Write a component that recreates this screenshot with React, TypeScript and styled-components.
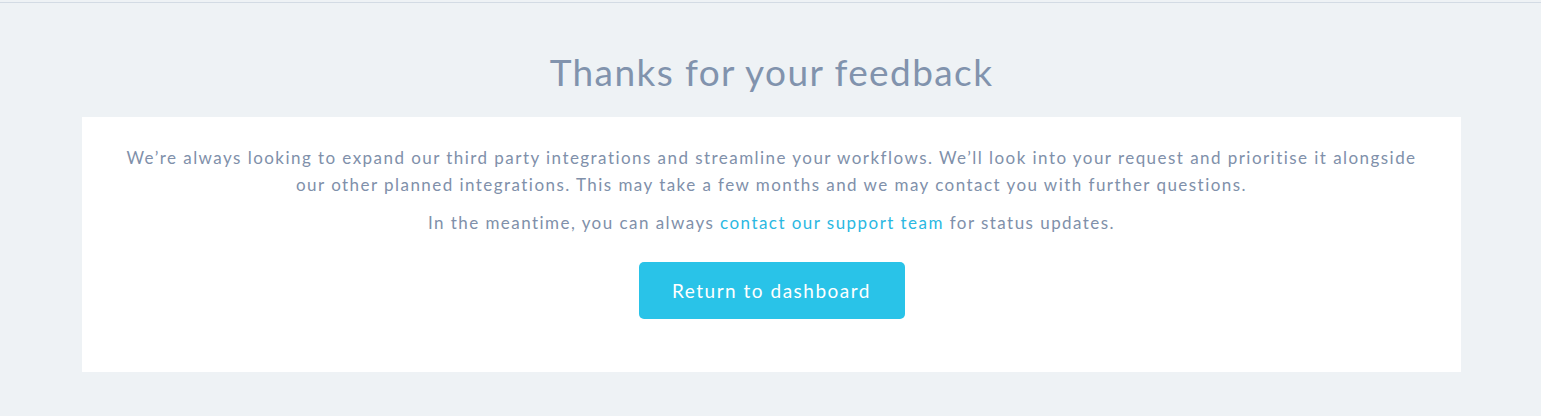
import styled, { createGlobalStyle } from 'styled-components';

const GlobalStyle = createGlobalStyle`
  html, body {
    margin: 0;
    padding: 0;
    background: #eef2f5;
  }
  body {
    font-family: 'Lato', 'Noto Sans', sans-serif;
  }
`;

const Page = styled.div`
  min-height: 416px;
  padding-top: 2px;
  box-sizing: border-box;
`;

const TopRule = styled.div`
  height: 1px;
  background: #d3dbe4;
`;

const Main = styled.main`
  display: flex;
  flex-direction: column;
  align-items: center;
  padding: 0 80px 0 82px;
`;

const Title = styled.h1`
  margin: 44px 0 0;
  height: 70px;
  font-size: 37px;
  font-weight: 400;
  line-height: 50px;
  letter-spacing: 1.4px;
  color: #8193ad;
`;

const Card = styled.section`
  align-self: stretch;
  background: #ffffff;
  display: flex;
  flex-direction: column;
  align-items: center;
  padding: 27px 20px 53px;
`;

const Text = styled.p`
  margin: 0 0 11px;
  max-width: 1322px;
  font-size: 17px;
  line-height: 27px;
  letter-spacing: 1.45px;
  text-align: center;
  color: #8090aa;
`;

const Link = styled.a`
  color: #2bb8e2;
  text-decoration: none;
`;

const Button = styled.button`
  margin-top: 15px;
  width: 266px;
  height: 57px;
  border: 0;
  border-radius: 5px;
  background: #29c3e8;
  color: #ffffff;
  font-family: inherit;
  font-size: 19px;
  letter-spacing: 1.5px;
  cursor: pointer;
`;

export default function App() {
  return (
    <>
      <GlobalStyle />
      <Page>
        <TopRule />
        <Main>
          <Title>Thanks for your feedback</Title>
          <Card>
            <Text>
              We’re always looking to expand our third party integrations and streamline your
              workflows. We’ll look into your request and prioritise it alongside our other planned
              integrations. This may take a few months and we may contact you with further questions.
            </Text>
            <Text>
              In the meantime, you can always <Link href="#">contact our support team</Link> for
              status updates.
            </Text>
            <Button>Return to dashboard</Button>
          </Card>
        </Main>
      </Page>
    </>
  );
}
